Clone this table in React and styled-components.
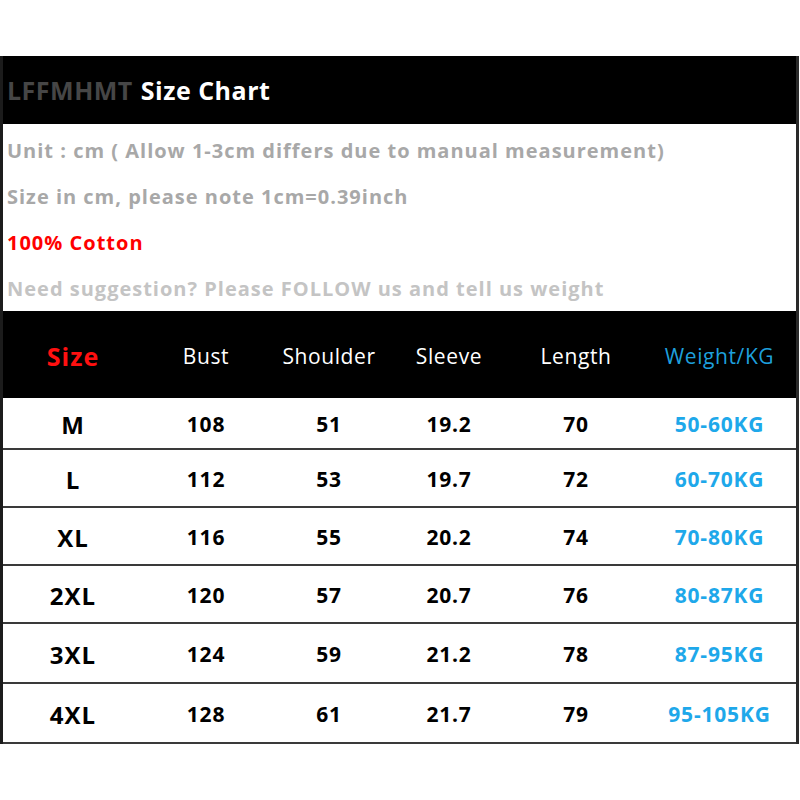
import React from 'react';
import styled, { createGlobalStyle } from 'styled-components';

const GlobalStyle = createGlobalStyle`
  html, body {
    margin: 0;
    padding: 0;
    background: #ffffff;
  }
  body {
    font-family: 'Open Sans', 'Liberation Sans', sans-serif;
  }
`;

const Page = styled.div`
  width: 800px;
  height: 800px;
  padding-top: 56px;
  box-sizing: border-box;
  background: #fff;
`;

const Chart = styled.div`
  width: 799px;
  box-sizing: border-box;
  border-left: 3px solid #1c1c1c;
  border-right: 3px solid #2a2a2a;
`;

const TitleBar = styled.div`
  height: 68px;
  background: #000;
  display: flex;
  align-items: center;
  padding-left: 4px;
  font-size: 25px;
  font-weight: 700;
  letter-spacing: 0.5px;
`;

const Brand = styled.span`
  color: #464646;
  margin-right: 8px;
`;

const Title = styled.span`
  color: #fff;
`;

const Info = styled.div`
  background: #fff;
  padding-top: 3px;
`;

const InfoLine = styled.div`
  height: 46px;
  display: flex;
  align-items: center;
  padding-left: 4px;
  font-size: 20px;
  font-weight: 700;
  letter-spacing: 1px;
  color: ${({ tone }) => tone || '#a8a8a8'};
  white-space: nowrap;
`;

const Grid = styled.div`
  display: grid;
  grid-template-columns: 140px 126px 120px 120px 134px 1fr;
  align-items: center;
  height: ${({ h }) => h}px;
  box-sizing: border-box;
  background: ${({ dark }) => (dark ? '#000' : '#fff')};
  border-bottom: ${({ dark }) => (dark ? 'none' : '2px solid #3a3a3a')};
`;

const HeadCell = styled.div`
  text-align: center;
  font-size: ${({ big }) => (big ? 25 : 21)}px;
  font-weight: ${({ big }) => (big ? 700 : 400)};
  letter-spacing: ${({ big }) => (big ? 1 : 0.6)}px;
  color: ${({ tone }) => tone || '#fff'};
  padding-top: 2px;
`;

const Cell = styled.div`
  text-align: center;
  font-size: ${({ big }) => (big ? 24 : 21)}px;
  font-weight: 700;
  letter-spacing: ${({ big }) => (big ? 1 : 0.8)}px;
  color: ${({ tone }) => tone || '#000'};
  padding-top: 2px;
`;

const rows = [
  ['M', '108', '51', '19.2', '70', '50-60KG'],
  ['L', '112', '53', '19.7', '72', '60-70KG'],
  ['XL', '116', '55', '20.2', '74', '70-80KG'],
  ['2XL', '120', '57', '20.7', '76', '80-87KG'],
  ['3XL', '124', '59', '21.2', '78', '87-95KG'],
  ['4XL', '128', '61', '21.7', '79', '95-105KG'],
];

const rowHeights = [52, 58, 58, 58, 60, 60];

export default function App() {
  return (
    <Page>
      <GlobalStyle />
      <Chart>
        <TitleBar>
          <Brand>LFFMHMT</Brand>
          <Title>Size Chart</Title>
        </TitleBar>
        <Info>
          <InfoLine>Unit : cm ( Allow 1-3cm differs due to manual measurement)</InfoLine>
          <InfoLine>Size in cm, please note 1cm=0.39inch</InfoLine>
          <InfoLine tone="#ff0000">100% Cotton</InfoLine>
          <InfoLine tone="#c4c4c4">Need suggestion? Please FOLLOW us and tell us weight</InfoLine>
        </Info>
        <Grid dark h={87}>
          <HeadCell big tone="#ff1010">Size</HeadCell>
          <HeadCell>Bust</HeadCell>
          <HeadCell>Shoulder</HeadCell>
          <HeadCell>Sleeve</HeadCell>
          <HeadCell>Length</HeadCell>
          <HeadCell tone="#1e9fdc">Weight/KG</HeadCell>
        </Grid>
        {rows.map((r, i) => (
          <Grid key={r[0]} h={rowHeights[i]}>
            <Cell big>{r[0]}</Cell>
            <Cell>{r[1]}</Cell>
            <Cell>{r[2]}</Cell>
            <Cell>{r[3]}</Cell>
            <Cell>{r[4]}</Cell>
            <Cell tone="#1ea8ea">{r[5]}</Cell>
          </Grid>
        ))}
      </Chart>
    </Page>
  );
}
